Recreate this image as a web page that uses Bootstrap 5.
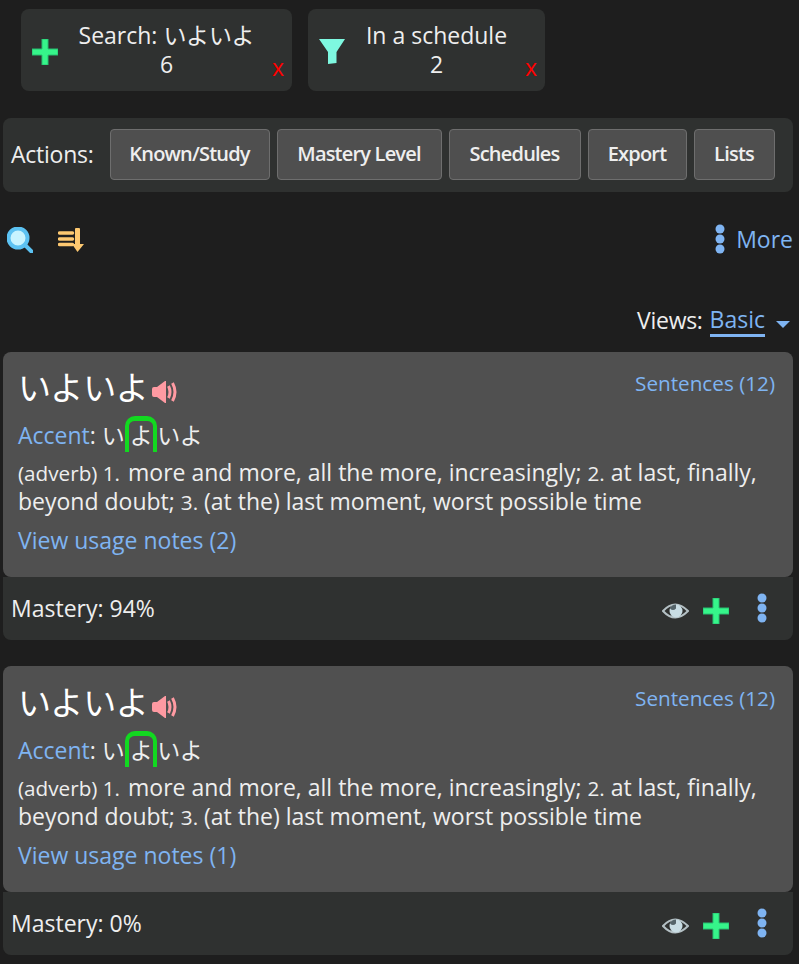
<!DOCTYPE html>
<html lang="en">
<head>
<meta charset="UTF-8">
<title>Search results</title>
<link href="https://cdn.jsdelivr.net/npm/bootstrap@5.3.0/dist/css/bootstrap.min.css" rel="stylesheet">
<style>
body { background: #1e1e1e; color: #eee; font-family: "Open Sans", "Noto Sans CJK JP", sans-serif; font-size: 23px; line-height: 29px; overflow: hidden; }
a { color: #7fb4f2; text-decoration: none; }
.page { padding: 9px 6px 0 3px; }
.chips { padding-left: 18px; gap: 16px; margin-bottom: 27px; }
.chip { background: #2f3130; border-radius: 8px; height: 82px; padding-left: 11px; }
.chip svg { margin-top: 4px; }
.chip-search { width: 271px; }
.chip-sched { width: 237px; }
.chip-body { flex: 1; text-align: center; padding: 12px 17px 0 0; }
.chip-x { position: absolute; right: 8px; bottom: 11px; color: #f00; line-height: 26px; }
.actions { background: #2f3130; border-radius: 8px; height: 74px; padding: 0 8px 2px; gap: 7px; margin-bottom: 28px; }
.actions .lbl { margin-right: 9px; letter-spacing: -.25px; }
.act-btn { background: #4f4f4f; border: 1px solid #6e6e6e; border-radius: 4px; color: #eee; height: 51px; font-size: 20px; font-weight: 600; letter-spacing: -.8px; padding: 0; white-space: nowrap; }
.btn-known { width: 160px; }
.btn-mastery { width: 165px; }
.btn-sched { width: 132px; }
.btn-export { width: 99px; }
.btn-lists { width: 81px; }
.tools { height: 38px; margin-bottom: 44px; padding-left: 4px; }
.tools > svg { margin-top: 2px; }
.sort-ico { margin-left: 25px; }
.more-dots { margin-right: 11px; }
.views { height: 36px; justify-content: flex-end; margin-bottom: 14px; }
.views span:first-child { letter-spacing: -.3px; }
.views a { border-bottom: 3px solid #7fb4f2; padding-top: 2px; line-height: 29px; margin-left: 7px; }
.caret-v { width: 0; height: 0; border-left: 7px solid transparent; border-right: 7px solid transparent; border-top: 7px solid #7fb4f2; margin: 8px 3px 0 11px; }
.word-box { background: #505050; border-radius: 8px; height: 225px; padding: 15px 15px 0; position: relative; }
.word-box-b { height: 226px; padding-top: 15.5px; }
.word-box-b .sent { top: 18px; }
.word { font-size: 33px; line-height: 42px; color: #fff; }
.word svg { margin-left: 3px; vertical-align: -3px; }
.sent { position: absolute; right: 18px; top: 17px; font-size: 20.7px; }
.accent-row { margin: 7px 0 6px; line-height: 32px; }
.acc { display: inline-block; border: 4px solid #12d920; border-top-width: 5px; border-bottom: 0; border-radius: 10px 10px 0 0; line-height: 29px; height: 36px; padding: 0 0 0 1px; margin: 0 .5px 0 0; }
.defn { margin-bottom: 10px; }
.sm-txt { font-size: 20.7px; line-height: 1; }
.sm-first { margin-right: 2px; }
.foot { background: #2f3130; border-radius: 0 0 8px 8px; height: 63px; padding: 0 26px 0 8px; margin-bottom: 26px; }
.plus-ico { margin-left: 14px; margin-top: 4px; }
.eye-ico { margin-top: 4px; }
.dots-ico { margin-left: 28px; margin-top: -2px; }
</style>
</head>
<body>
<div class="page">
  <div class="d-flex chips">
    <div class="chip chip-search d-flex align-items-center position-relative">
      <svg width="26" height="26" viewBox="0 0 26 26"><path d="M10 0h6v10h10v6H16v10h-6V16H0v-6h10z" fill="#36f58a" stroke="#27c070"/></svg>
      <div class="chip-body align-self-start">Search: いよいよ<br>6</div>
      <span class="chip-x">x</span>
    </div>
    <div class="chip chip-sched d-flex align-items-center position-relative">
      <svg width="26" height="26" viewBox="0 0 26 26"><path d="M0 0h26L17.500 13v11l-8.500 1V13z" fill="#7ef8e0"/></svg>
      <div class="chip-body align-self-start">In a schedule<br>2</div>
      <span class="chip-x">x</span>
    </div>
  </div>

  <div class="actions d-flex align-items-center">
    <span class="lbl">Actions:</span>
    <button class="btn act-btn btn-known">Known/Study</button>
    <button class="btn act-btn btn-mastery">Mastery Level</button>
    <button class="btn act-btn btn-sched">Schedules</button>
    <button class="btn act-btn btn-export">Export</button>
    <button class="btn act-btn btn-lists">Lists</button>
  </div>

  <div class="tools d-flex align-items-center">
    <svg width="26" height="26" viewBox="0 0 26 26"><circle cx="11" cy="11" r="9.500" fill="#c8f4ff" stroke="#5cc2f2" stroke-width="4"/><path d="M18 18l6.500 6.500" stroke="#5cc2f2" stroke-width="4" stroke-linecap="round"/></svg>
    <svg class="sort-ico" width="26" height="24" viewBox="0 0 26 24"><path d="M1.500 5h13M1.500 11h13M1.500 16.500h13" stroke="#fdc870" stroke-width="3.500" stroke-linecap="round"/><path d="M17 1q0-1 1-1h3q1 0 1 1v15h4l-6.500 8L14 16h3z" fill="#fdc870"/></svg>
    <a href="#" class="ms-auto d-flex align-items-center">
      <svg width="10" height="30" viewBox="0 0 10 30" class="more-dots"><circle cx="5" cy="5" r="4.500" fill="#7fb4f2"/><circle cx="5" cy="15" r="4.500" fill="#7fb4f2"/><circle cx="5" cy="25" r="4.500" fill="#7fb4f2"/></svg>More</a>
  </div>

  <div class="views d-flex align-items-center">
    <span>Views:</span><a href="#">Basic</a><span class="caret-v"></span>
  </div>

  <div class="word-box">
    <div class="word">いよいよ<svg width="26" height="22" viewBox="0 0 26 22"><path d="M0 8q0-2 2-2h3l8-6h1v22h-1l-8-6H2q-2 0-2-2z" fill="#ff9aa2"/><path d="M16.500 5q3 6 0 12M20.500 2q5 9 0 18" stroke="#ff9aa2" stroke-width="3" fill="none"/></svg></div>
    <a href="#" class="sent">Sentences (12)</a>
    <div class="accent-row"><a href="#">Accent</a>: い<span class="acc">よ</span>いよ</div>
    <div class="defn"><span class="sm-txt sm-first">(adverb) 1.</span> more and more, all the more, increasingly; <span class="sm-txt">2.</span> at last, finally, beyond doubt; <span class="sm-txt">3.</span> (at the) last moment, worst possible time</div>
    <a href="#">View usage notes (2)</a>
  </div>
  <div class="foot d-flex align-items-center">
    <span>Mastery: 94%</span>
    <svg class="ms-auto eye-ico" width="27" height="20" viewBox="0 0 27 20"><path d="M1 10q12-13 25 0q-13 13-25 0z" fill="#2f3130" stroke="#b4c0c4" stroke-width="2"/><circle cx="14" cy="10" r="6.500" fill="#c9dde4"/><path d="M14 3.500a6.500 6.500 0 0 0-6 4q3 3 6 0z" fill="#55646a"/></svg>
    <svg class="plus-ico" width="26" height="26" viewBox="0 0 26 26"><path d="M10 0h6v10h10v6H16v10h-6V16H0v-6h10z" fill="#36f58a" stroke="#27c070"/></svg>
    <svg class="dots-ico" width="10" height="30" viewBox="0 0 10 30"><circle cx="5" cy="5" r="4.500" fill="#7fb4f2"/><circle cx="5" cy="15" r="4.500" fill="#7fb4f2"/><circle cx="5" cy="25" r="4.500" fill="#7fb4f2"/></svg>
  </div>

  <div class="word-box word-box-b">
    <div class="word">いよいよ<svg width="26" height="22" viewBox="0 0 26 22"><path d="M0 8q0-2 2-2h3l8-6h1v22h-1l-8-6H2q-2 0-2-2z" fill="#ff9aa2"/><path d="M16.500 5q3 6 0 12M20.500 2q5 9 0 18" stroke="#ff9aa2" stroke-width="3" fill="none"/></svg></div>
    <a href="#" class="sent">Sentences (12)</a>
    <div class="accent-row"><a href="#">Accent</a>: い<span class="acc">よ</span>いよ</div>
    <div class="defn"><span class="sm-txt sm-first">(adverb) 1.</span> more and more, all the more, increasingly; <span class="sm-txt">2.</span> at last, finally, beyond doubt; <span class="sm-txt">3.</span> (at the) last moment, worst possible time</div>
    <a href="#">View usage notes (1)</a>
  </div>
  <div class="foot d-flex align-items-center">
    <span>Mastery: 0%</span>
    <svg class="ms-auto eye-ico" width="27" height="20" viewBox="0 0 27 20"><path d="M1 10q12-13 25 0q-13 13-25 0z" fill="#2f3130" stroke="#b4c0c4" stroke-width="2"/><circle cx="14" cy="10" r="6.500" fill="#c9dde4"/><path d="M14 3.500a6.500 6.500 0 0 0-6 4q3 3 6 0z" fill="#55646a"/></svg>
    <svg class="plus-ico" width="26" height="26" viewBox="0 0 26 26"><path d="M10 0h6v10h10v6H16v10h-6V16H0v-6h10z" fill="#36f58a" stroke="#27c070"/></svg>
    <svg class="dots-ico" width="10" height="30" viewBox="0 0 10 30"><circle cx="5" cy="5" r="4.500" fill="#7fb4f2"/><circle cx="5" cy="15" r="4.500" fill="#7fb4f2"/><circle cx="5" cy="25" r="4.500" fill="#7fb4f2"/></svg>
  </div>
</div>
<script src="https://cdn.jsdelivr.net/npm/bootstrap@5.3.0/dist/js/bootstrap.bundle.min.js"></script>
</body>
</html>
